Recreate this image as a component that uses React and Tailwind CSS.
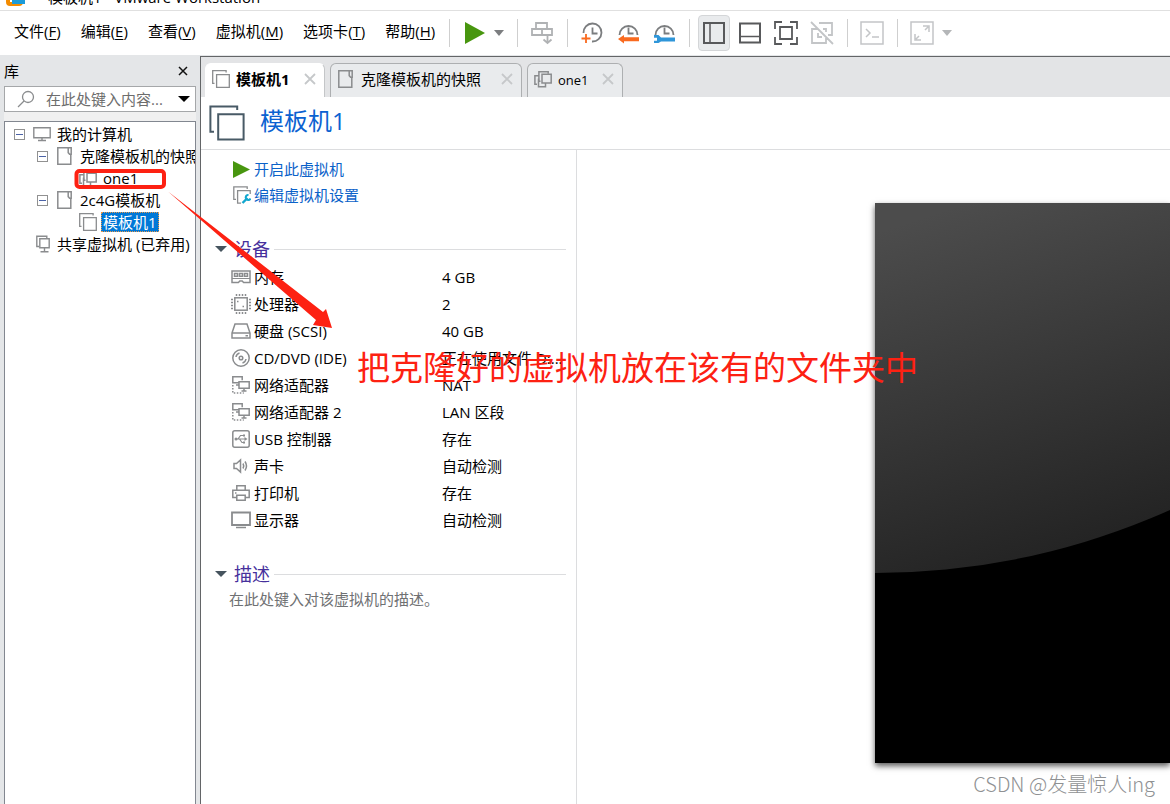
import React, { useState } from 'react';

const GRAY = '#8a8c8e';

const menus = [
  { label: '文件', hotkey: 'F' },
  { label: '编辑', hotkey: 'E' },
  { label: '查看', hotkey: 'V' },
  { label: '虚拟机', hotkey: 'M' },
  { label: '选项卡', hotkey: 'T' },
  { label: '帮助', hotkey: 'H' },
];

const devices = [
  { icon: 'memory', name: '内存', value: '4 GB' },
  { icon: 'cpu', name: '处理器', value: '2' },
  { icon: 'disk', name: '硬盘 (SCSI)', value: '40 GB' },
  { icon: 'cd', name: 'CD/DVD (IDE)', value: '正在使用文件 D:...' },
  { icon: 'network', name: '网络适配器', value: 'NAT' },
  { icon: 'network', name: '网络适配器 2', value: 'LAN 区段' },
  { icon: 'usb', name: 'USB 控制器', value: '存在' },
  { icon: 'sound', name: '声卡', value: '自动检测' },
  { icon: 'printer', name: '打印机', value: '存在' },
  { icon: 'display', name: '显示器', value: '自动检测' },
];

function Svg({ w = 20, h = 20, color = GRAY, sw = 1.5, children }) {
  return (
    <svg width={w} height={h} viewBox={`0 0 ${w} ${h}`} fill="none" stroke={color} strokeWidth={sw} className="block shrink-0" aria-hidden="true">
      {children}
    </svg>
  );
}

function DeviceIcon({ name }) {
  switch (name) {
    case 'memory':
      return (
        <Svg>
          <path d="M1 4h18v11.500h-6.400l-1.400-1.500H8.800l-1.400 1.500H1z" />
          <path d="M1 11.500h18" strokeWidth="1" />
          <path d="M3.500 6.500h3v2.800h-3zM8.500 6.500h3v2.800h-3zM13.500 6.500h3v2.800h-3z" />
        </Svg>
      );
    case 'cpu':
      return (
        <Svg>
          <rect x="3.8" y="3.8" width="12.4" height="12.4" />
          <path d="M5.500 0v2M8.500 0v2M11.500 0v2M14.500 0v2M5.500 18v2M8.500 18v2M11.500 18v2M14.500 18v2M0 5.500h2M0 8.500h2M0 11.500h2M0 14.500h2M18 5.500h2M18 8.500h2M18 11.500h2M18 14.500h2" />
          <path d="M6 7.500h1.500M11.500 12.500H13" />
        </Svg>
      );
    case 'disk':
      return (
        <Svg>
          <path d="M1 12 4 3h12l3 9v5H1zM1 12h18M14.500 14.700h2.500" />
        </Svg>
      );
    case 'cd':
      return (
        <Svg>
          <circle cx="10" cy="10" r="8.200" />
          <circle cx="10" cy="10" r="1.800" />
          <path d="M5 9a5 5 0 0 1 3.500-4M15 11a5 5 0 0 1-3.500 4" />
        </Svg>
      );
    case 'network':
      return (
        <Svg>
          <path d="M8 7.800H1.800v-6h9.400v3.500M5 10h2.500M8 6.800h10.200v6.400H8zM10.500 16h5M13 13v3" />
          <path d="M1.800 10v8h11" strokeDasharray="1.5 1.5" />
        </Svg>
      );
    case 'usb':
      return (
        <Svg>
          <rect x="1.8" y="1.8" width="16.4" height="16.4" rx="2" />
          <path d="M4 10h11M7 10l2.500-3.500H12M8.500 10l2.500 3.500h1.500" strokeWidth="1.2" />
          <path d="m13.500 8 3 2-3 2zM12 5.500h2v2h-2zM12 12.500h2v2h-2z" fill={GRAY} stroke="none" />
          <circle cx="5" cy="10" r="1.5" fill={GRAY} stroke="none" />
        </Svg>
      );
    case 'sound':
      return (
        <Svg>
          <path d="M3 7.500h2.500L9.500 4v12l-4-3.500H3zM12 7.500q1.500 2.500 0 5M14 5.500q3 4.500 0 9" />
        </Svg>
      );
    case 'printer':
      return (
        <Svg>
          <path d="M5.800 7V2.800h8.400V7M5.500 14.500H1.800V7.200h16.400v7.300h-3.700M5.800 12.200h8.400v5H5.800zM4 10h1.500" />
        </Svg>
      );
    default:
      return (
        <Svg>
          <path d="M1 2.500h18v12.500H1z" strokeWidth="1.8" />
          <path d="M5 17.500h10" />
        </Svg>
      );
  }
}

const VmIcon = ({ size = 18, color = GRAY }) => (
  <svg width={size} height={size} viewBox="0 0 18 18" fill="none" stroke={color} strokeWidth={size > 20 ? 1 : 1.3} className="block shrink-0" aria-hidden="true">
    <path d="M2.500 13.400H.7V.7h13.400v1.800" />
    <path d="M4.600 4.600h12.700v12.700H4.600z" />
  </svg>
);

const FolderIcon = () => (
  <Svg w={18} h={18} sw={1.5}>
    <path d="M12.200.8H1.800v16.400h13V7.500M12.200.8h3v6.400h-1.600l-1.400-1.600z" />
  </Svg>
);

const CloneIcon = () => (
  <Svg w={18} h={18} sw={1.5}>
    <path d="M3 14.200H.9V5.800h4M6.500 11.200H4.900v-9.400h9.300v2" />
    <path d="M8 4.200h9.200v8.800H8zM4.500 8.500v8.300h7v-3.500" />
  </Svg>
);

const Monitor = () => (
  <Svg w={18} h={18} sw={1.4}>
    <path d="M.8 2.800h16.400v10H.8zM5 15.500h8M9 13v2.500" />
  </Svg>
);

const SharedIcon = () => (
  <Svg w={18} h={18} sw={1.4}>
    <path d="M6 11.500H3.800V1.200h10V4M6.800 3.800h9.400v9H6.800zM7.500 16.800h8M11.500 13v3.500" />
  </Svg>
);

const CloseIcon = ({ color = '#c6c8ca' }) => (
  <Svg w={12} h={12} color={color} sw={1.8}>
    <path d="m1 1 10 10M11 1 1 11" />
  </Svg>
);

const Caret = ({ color = '#7c7e80', w = 10 }) => (
  <svg width={w} height="6" viewBox="0 0 10 6" preserveAspectRatio="none" className="block shrink-0" aria-hidden="true">
    <path d="M0 0h10L5 6z" fill={color} />
  </svg>
);

const PlayIcon = ({ w = 20, h = 22 }) => (
  <svg width={w} height={h} viewBox="0 0 20 22" preserveAspectRatio="none" className="block shrink-0" aria-hidden="true">
    <path d="M0 0v22l20-11z" fill="#48960f" />
  </svg>
);

const Clock = ({ d, children }) => (
  <Svg w={24} h={24} color="#7b7d7f" sw={1.8}>
    <path d={d} />
    <path d="M12.500 6.500v6h5" />
    {children}
  </Svg>
);

const Separator = () => <div className="h-7 w-px shrink-0 bg-[#cfcfcf]" />;

function ToolButton({ label, active, children }) {
  return (
    <button
      type="button"
      aria-label={label}
      className={`mx-[2px] flex h-9 w-8 shrink-0 items-center justify-center rounded border ${active ? 'border-[#d4d6d8] bg-[#e9ebed]' : 'border-transparent'}`}
    >
      {children}
    </button>
  );
}

function ToolGroup({ children }) {
  return <div className="flex shrink-0 items-center pr-[7px] pl-[6px]">{children}</div>;
}

function MenuBar() {
  return (
    <div className="flex h-[45px] shrink-0 items-center border-t border-[#e0e0e0] bg-white">
      <nav className="flex w-[449px] shrink-0 gap-5 pb-1 pl-[14px]">
        {menus.map((m) => (
          <button key={m.hotkey} type="button" className="leading-6 whitespace-nowrap">
            {m.label}(<span className="underline underline-offset-2">{m.hotkey}</span>)
          </button>
        ))}
      </nav>
      <Separator />
      <div className="flex shrink-0 items-center pr-3 pl-[7px]">
        <ToolButton label="开启此虚拟机"><PlayIcon /></ToolButton>
        <button type="button" aria-label="电源选项" className="px-[1px]"><Caret /></button>
      </div>
      <Separator />
      <ToolGroup>
        <ToolButton label="发送 Ctrl+Alt+Del">
          <Svg w={24} h={24} color="#b0b2b4" sw={1.8}>
            <path d="M6 2h11v6H6zM2 8h10v6H2zM12 8h10v6H12zM17.500 15v7M13.500 18.500l4 3.500 4-3.500" />
          </Svg>
        </ToolButton>
      </ToolGroup>
      <Separator />
      <ToolGroup>
        <ToolButton label="拍摄快照">
          <Clock d="M3.500 12A9 9 0 1 1 12 20.500">
            <path d="M1.500 17.500h9M6 13v9" stroke="#f96a1f" />
          </Clock>
        </ToolButton>
        <ToolButton label="恢复快照">
          <Clock d="M3.500 14a9 9 0 1 1 18 0">
            <path d="m2 18 6-4v2.300h15v4H8v2.100z" fill="#f96a1f" stroke="none" />
          </Clock>
        </ToolButton>
        <ToolButton label="管理快照">
          <Clock d="M3.500 14a9 9 0 1 1 18 0">
            <path d="M2 14h4.500l2.500 2.500h14v4H9L6.500 22H2v-2.300h3v-2.900H2z" fill="#2f96d9" stroke="none" />
          </Clock>
        </ToolButton>
      </ToolGroup>
      <Separator />
      <ToolGroup>
        <ToolButton label="显示库" active>
          <Svg w={22} h={22} color="#58595b" sw={2}><path d="M1 1h20v20H1z" /><path d="M7 1v20" strokeWidth="1.500" /></Svg>
        </ToolButton>
        <ToolButton label="显示缩略图栏">
          <Svg w={22} h={22} color="#58595b" sw={2}><path d="M1 1.500h20v19H1z" /><path d="M1 14.500h20" strokeWidth="1.500" /></Svg>
        </ToolButton>
        <ToolButton label="全屏">
          <Svg w={24} h={24} color="#58595b" sw={1.8}><path d="M1 8V1h7M16 1h7v7M23 16v7h-7M8 23H1v-7M6 6h12v12H6z" /></Svg>
        </ToolButton>
        <ToolButton label="Unity 模式">
          <Svg w={24} h={24} color="#c3c5c7" sw={1.8}><path d="M9 2h13v12h-4M7 8H2v14h14v-5M13 8h3v3M8 12v4h4M1 1l22 22" /></Svg>
        </ToolButton>
      </ToolGroup>
      <Separator />
      <ToolGroup>
        <ToolButton label="控制台">
          <Svg w={24} h={24} color="#c3c5c7" sw={1.5}><path d="M1 1h22v22H1zM6 8l4 4-4 4M12 16h7" /></Svg>
        </ToolButton>
      </ToolGroup>
      <Separator />
      <div className="flex shrink-0 items-center pl-[6px]">
        <ToolButton label="自由拉伸">
          <Svg w={24} h={24} color="#c3c5c7" sw={1.5}>
            <path d="M1 1h22v22H1z" />
            <path d="M13 5h6v6M18 6l-3 3M5 13v6h6M6 18l3-3" />
          </Svg>
        </ToolButton>
        <button type="button" aria-label="拉伸选项" className="px-[2px]"><Caret color="#b4b6b8" /></button>
      </div>
    </div>
  );
}

const Toggle = () => (
  <button type="button" aria-label="折叠" className="mr-2 flex h-[11px] w-[11px] shrink-0 items-center justify-center border border-[#919191] bg-white">
    <span className="h-px w-[7px] bg-[#4b63a7]" />
  </button>
);

function TreeRow({ indent, toggle, icon, label, selected }) {
  return (
    <li className={`flex h-[22px] items-center overflow-hidden ${indent}`}>
      {toggle && <Toggle />}
      {icon}
      <button type="button" className={`ml-[4px] px-[2px] leading-5 whitespace-nowrap ${selected ? 'bg-[#0078d7] text-white outline-1 -outline-offset-1 outline-dotted outline-[#e8994c]' : ''}`}>
        {label}
      </button>
    </li>
  );
}

function Library() {
  const [query, setQuery] = useState('');

  return (
    <aside className="flex w-[200px] shrink-0 flex-col bg-[#e4e6e8] pr-1 pl-1">
      <div className="flex h-[31px] items-center justify-between pr-2">
        <h2 className="leading-6">库</h2>
        <button type="button" aria-label="关闭"><Svg w={10} h={10} color="#111" sw={1.5}><path d="m1 1 8 8M9 1 1 9" /></Svg></button>
      </div>
      <div className="flex h-[26px] shrink-0 items-center border border-[#a5a7a9] bg-white pr-[5px] pl-[12px]">
        <Svg w={18} h={18} sw={1.3}>
          <circle cx="11" cy="7" r="5.500" />
          <path d="m7 11-6 6" />
        </Svg>
        <input
          type="text"
          aria-label="搜索"
          value={query}
          onChange={(e) => setQuery(e.target.value)}
          placeholder="在此处键入内容..."
          className="ml-[11px] min-w-0 flex-1 bg-transparent outline-none placeholder:text-[#6d6d6d]"
        />
        <button type="button" aria-label="搜索选项"><Caret color="#000" w={12} /></button>
      </div>
      <div className="h-[9px] shrink-0 bg-[#f0f0f0]" />
      <ul className="flex-1 overflow-hidden border border-b-0 border-[#828790] bg-white pt-px">
        <TreeRow indent="pl-[9px]" toggle icon={<Monitor />} label="我的计算机" />
        <TreeRow indent="pl-[32px]" toggle icon={<FolderIcon />} label="克隆模板机的快照" />
        <TreeRow indent="pl-[74px]" icon={<CloneIcon />} label="one1" />
        <TreeRow indent="pl-[32px]" toggle icon={<FolderIcon />} label="2c4G模板机" />
        <TreeRow indent="pl-[74px]" icon={<VmIcon />} label="模板机1" selected />
        <TreeRow indent="pl-[28px]" icon={<SharedIcon />} label="共享虚拟机 (已弃用)" />
      </ul>
    </aside>
  );
}

function Tab({ icon, width, active, children }) {
  return (
    <div className={`flex h-[34px] shrink-0 items-center rounded-t-md border border-b-0 pr-2 pb-[3px] pl-[6px] ${width} ${active ? 'border-[#c4c6c8] border-t-white border-l-white bg-white font-bold' : 'border-[#adafb1] bg-[#e9ebed]'}`}>
      {icon}
      <button type="button" className="ml-[6px] flex-1 text-left leading-6 whitespace-nowrap">{children}</button>
      <button type="button" aria-label="关闭选项卡"><CloseIcon /></button>
    </div>
  );
}

function SectionTitle({ children }) {
  return (
    <div className="flex items-center pr-[10px] pl-[14px]">
      <Caret color="#46545e" w={12} />
      <h2 className="ml-[7px] text-[18px] leading-7 text-[#46309c]">{children}</h2>
      <div className="ml-1 h-px flex-1 bg-[#dcdddf]" />
    </div>
  );
}

function Details() {
  return (
    <section className="w-[376px] shrink-0 border-r border-[#dcdddf]">
      <div className="flex flex-col pt-[6px] pl-[32px] text-[#0b62c9]">
        <a href="#start" className="flex h-[26px] items-center">
          <PlayIcon w={17} h={17} />
          <span className="ml-[4px] leading-6">开启此虚拟机</span>
        </a>
        <a href="#settings" className="flex h-[26px] items-center">
          <Svg w={18} h={18} sw={1.3}>
            <path d="M3 13.400H.8V.8h13.400V3M8 17.200H4.600V4.600h12.600V8" />
            <path d="m9.500 17 5-5" stroke="#12a7cf" strokeWidth="2.400" />
            <path d="M15.500 9a2.500 2.500 0 1 0 2 3.500" stroke="#12a7cf" strokeWidth="2" />
          </Svg>
          <span className="ml-[3px] leading-6">编辑虚拟机设置</span>
        </a>
      </div>

      <div className="pt-[27px]">
        <SectionTitle>设备</SectionTitle>
        <table className="ml-[30px] w-[340px] table-fixed border-collapse">
          <tbody>
            {devices.map((d) => (
              <tr key={d.name} className="h-[27px]">
                <th scope="row" className="w-[211px] p-0 text-left font-normal">
                  <span className="flex items-center">
                    <DeviceIcon name={d.icon} />
                    <span className="ml-[3px] leading-6">{d.name}</span>
                  </span>
                </th>
                <td className="p-0 leading-6 whitespace-nowrap">{d.value}</td>
              </tr>
            ))}
          </tbody>
        </table>
      </div>

      <div className="pt-[27px]">
        <SectionTitle>描述</SectionTitle>
        <p className="pl-[28px] leading-[22px] text-[#6f7173]">在此处键入对该虚拟机的描述。</p>
      </div>
    </section>
  );
}

function Preview() {
  return (
    <div className="flex min-w-0 flex-1 flex-col overflow-hidden pt-[53px] pl-[298px]">
      <div className="h-[560px] shrink-0 bg-black shadow-[0_3px_6px_rgba(0,0,0,0.65)]">
        <svg width="100%" height="100%" aria-hidden="true">
          <defs>
            <linearGradient id="gloss" gradientUnits="userSpaceOnUse" x1="0" y1="30" x2="110" y2="370">
              <stop offset="0" stopColor="#4c4c4c" />
              <stop offset="1" stopColor="#242424" />
            </linearGradient>
          </defs>
          <circle cx="0" cy="-352" r="722" fill="url(#gloss)" />
        </svg>
      </div>
    </div>
  );
}

function Annotations() {
  return (
    <div className="pointer-events-none absolute inset-0 overflow-hidden">
      <svg width="400" height="400" className="absolute top-0 left-0" aria-hidden="true">
        <rect x="76.500" y="171" width="87.500" height="16" rx="3" fill="none" stroke="#fd2112" strokeWidth="4" />
        <path d="M168 191.500 323 312l3-3 6 19-19-3 3-5z" fill="#fd2112" />
      </svg>
      <p className="absolute top-[344px] left-[357px] text-[33px] leading-[48px] whitespace-nowrap text-[#fd2112]">把克隆好的虚拟机放在该有的文件夹中</p>
      <p className="absolute right-[15px] bottom-[6px] font-['Noto_Sans_CJK_SC',sans-serif] text-[20px] leading-7 font-light text-[#8f9193]">CSDN @发量惊人ing</p>
    </div>
  );
}

export default function App() {
  return (
    <div className="relative flex h-screen flex-col overflow-hidden bg-white font-['Open_Sans','Noto_Sans_CJK_SC',sans-serif] text-[15px] text-black">
      <header className="flex h-[10px] shrink-0 items-end overflow-hidden pl-[6px]">
        <svg width="20" height="24" viewBox="0 0 20 24" fill="none" strokeWidth="4" className="mb-1 shrink-0" aria-hidden="true">
          <path d="M5 9H2v11q0 2 2 2h9q2 0 2-2v-3" stroke="#f38b00" />
          <path d="M8 3h9v17H8z" stroke="#1c9bd8" />
        </svg>
        <h1 className="ml-[22px] leading-[26px] whitespace-nowrap">模板机1 - VMware Workstation</h1>
      </header>
      <MenuBar />
      <div className="flex min-h-0 flex-1 bg-[#e4e6e8]">
        <Library />
        <main className="mt-px flex min-w-0 flex-1 flex-col border-t border-l border-[#636567] bg-white">
          <div className="flex h-10 shrink-0 items-end gap-[5px] bg-[#e3e4e6] pl-[4px]">
            <Tab icon={<VmIcon />} width="w-[120px]" active>模板机1</Tab>
            <Tab icon={<FolderIcon />} width="w-[192px]">克隆模板机的快照</Tab>
            <Tab icon={<CloneIcon />} width="w-[96px]"><span className="text-[13px]">one1</span></Tab>
          </div>
          <div className="flex h-[53px] shrink-0 items-center border-b border-[#dcdddf] pl-[8px]">
            <VmIcon size={36} color="#485a66" />
            <h2 className="mb-1 ml-[15px] text-[24px] leading-9 text-[#0b62d1]">模板机1</h2>
          </div>
          <div className="flex min-h-0 flex-1">
            <Details />
            <Preview />
          </div>
        </main>
      </div>
      <Annotations />
    </div>
  );
}
